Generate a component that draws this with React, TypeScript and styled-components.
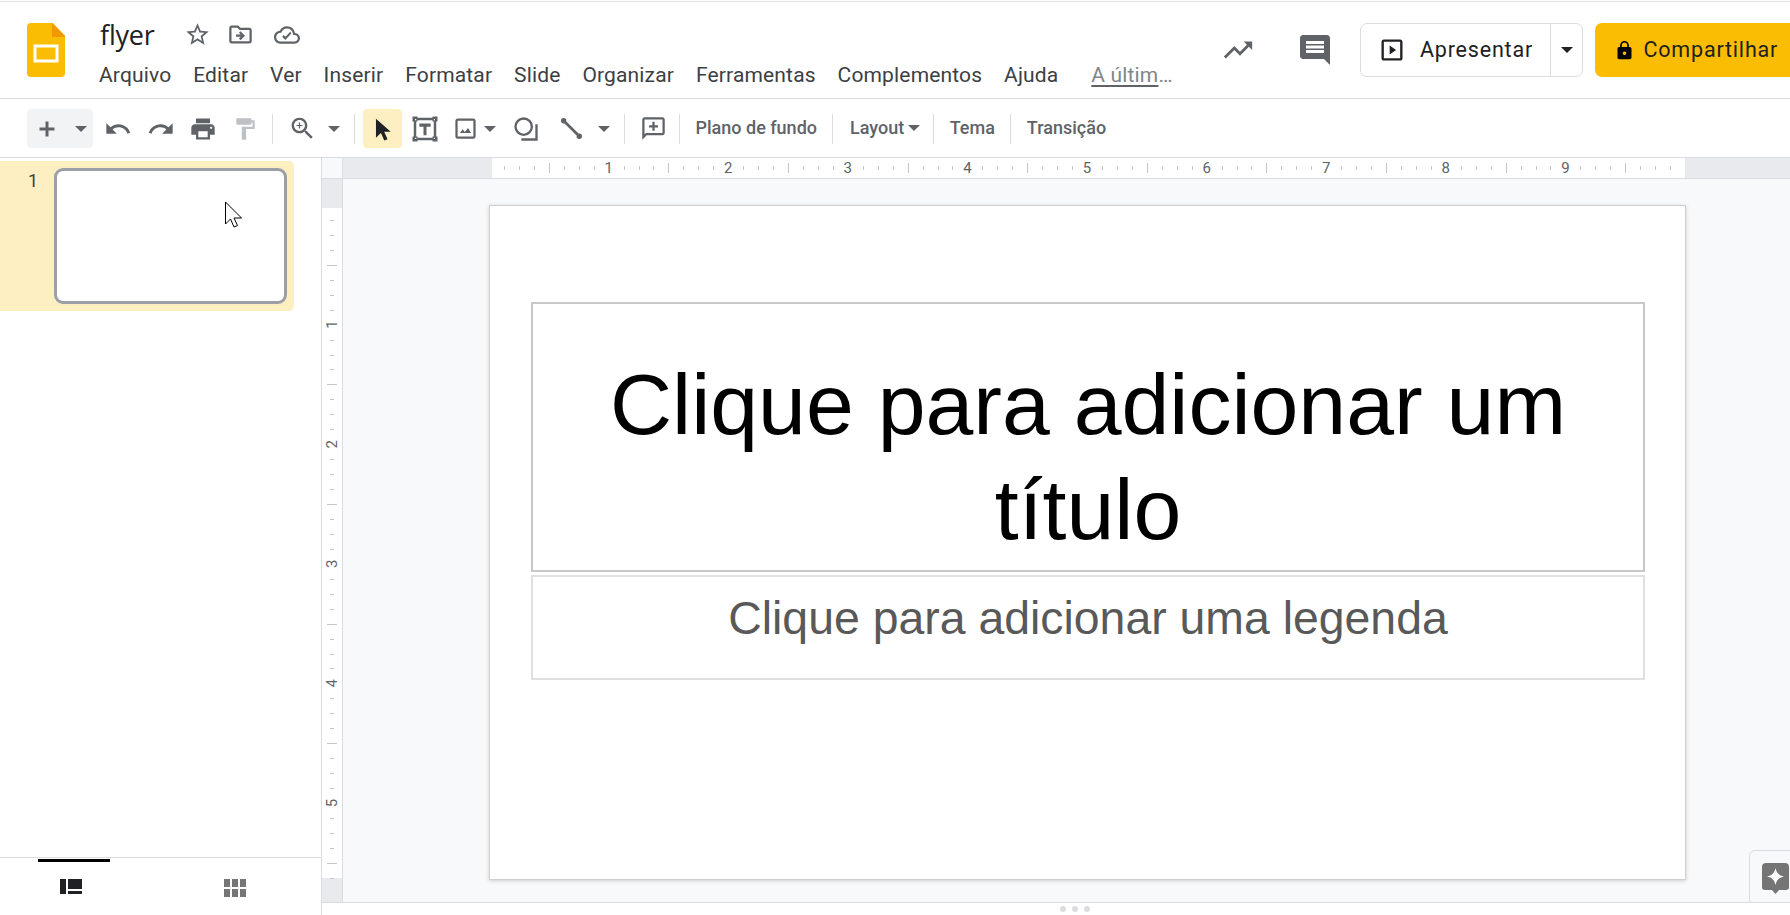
import React from 'react';
import styled, { createGlobalStyle } from 'styled-components';

const Global = createGlobalStyle`
  html, body { margin: 0; padding: 0; height: 100%; overflow: hidden; background: #fff; }
  body { font-family: Roboto, "Liberation Sans", sans-serif; color: #202124; }
  #root { height: 100%; }
`;

const Page = styled.div`
  width: 1790px; height: 915px; display: flex; flex-direction: column; overflow: hidden; background: #fff;
`;
const Header = styled.header`
  flex: none; height: 96px; margin-top: 1px; border-top: 1px solid #e0e0e0; border-bottom: 1px solid #dadce0;
  box-sizing: content-box; display: flex; align-items: flex-start; position: relative;
`;
const Logo = styled.svg`
  flex: none; width: 38px; height: 54px; margin: 21px 0 0 27px;
`;
const DocInfo = styled.div`
  margin-left: 34px; display: flex; flex-direction: column;
`;
const TitleRow = styled.div`
  height: 43px; margin-top: 11px; display: flex; align-items: center;
`;
const DocTitle = styled.span`
  font-family: "Open Sans", Roboto, sans-serif; font-size: 27px; color: #202124; width: 85px; letter-spacing: -0.2px; padding-left: 1px; box-sizing: border-box;
`;
const Glyph = styled.svg<{ $size: number; $color?: string; $ml?: number }>`
  flex: none; width: ${p => p.$size}px; height: ${p => p.$size}px; fill: ${p => p.$color || '#5f6368'};
  margin-left: ${p => p.$ml || 0}px; display: block;
`;
const Menu = styled.nav`
  display: flex; align-items: center; height: 38px;
`;
const MenuItem = styled.span`
  font-size: 21px; letter-spacing: 0.16px; color: #3c4043; margin-right: 21.850px; white-space: nowrap;
`;
const LastEdit = styled.span`
  font-size: 21px; letter-spacing: 0.16px; color: #80868b; white-space: nowrap; margin-left: 11px;
  span { text-decoration: underline; text-decoration-thickness: 2px; text-underline-offset: 3px; text-decoration-color: #5f6368; }
`;
const Right = styled.div`
  position: absolute; left: 1223px; top: 21px; display: flex; align-items: center; height: 54px; width: 600px;
`;
const PresentBtn = styled.div`
  margin-left: 27px; width: 223px; height: 54px; box-sizing: border-box; border: 1px solid #dadce0; border-radius: 7px;
  display: flex; align-items: center;
`;
const PresentMain = styled.div`
  width: 190px; height: 100%; box-sizing: border-box; border-right: 1px solid #dadce0; display: flex; align-items: center; padding-left: 17px;
`;
const BtnLabel = styled.span<{ $ml: number }>`
  font-family: Roboto, sans-serif; font-size: 21.500px; letter-spacing: 0.8px; color: #202124; margin: -2px 0 0 ${p => p.$ml}px; white-space: nowrap;
`;
const Caret = styled.span<{ $w?: number; $dark?: boolean }>`
  display: block; flex: none; width: 0; height: 0;
  border-left: ${p => (p.$w || 13) / 2}px solid transparent; border-right: ${p => (p.$w || 13) / 2}px solid transparent;
  border-top: ${p => (p.$w || 13) / 2}px solid ${p => (p.$dark ? '#202124' : '#5f6368')};
`;
const CaretCell = styled.div<{ $w: number; $ml?: number }>`
  flex: none; width: ${p => p.$w}px; margin-left: ${p => p.$ml || 0}px; display: flex; align-items: center; justify-content: center; height: 39px;
`;
const ShareBtn = styled.div`
  margin-left: 12px; flex: none; width: 230px; height: 54px; background: #fbbc04; border-radius: 7px; display: flex; align-items: center; padding-left: 18.500px; box-sizing: border-box;
`;
const Toolbar = styled.div`
  flex: none; height: 57px; border-bottom: 1px solid #dadce0; box-sizing: content-box; display: flex; align-items: center; padding-left: 27px; padding-top: 1px;
`;
const NewBtn = styled.div`
  flex: none; width: 66px; height: 39px; border-radius: 4px; background: #f1f3f4; display: flex; align-items: center; padding-left: 8px; box-sizing: border-box;
`;
const ToolBtn = styled.div<{ $w: number; $ml?: number; $active?: boolean }>`
  flex: none; width: ${p => p.$w}px; height: 39px; margin-left: ${p => p.$ml || 0}px; border-radius: 4px;
  background: ${p => (p.$active ? '#feefc3' : 'transparent')}; display: flex; align-items: center; justify-content: center;
`;
const Sep = styled.div<{ $ml: number }>`
  flex: none; width: 1px; height: 30px; margin-left: ${p => p.$ml}px; background: #dadce0;
`;
const TextBtn = styled.div<{ $pl?: number; $pr?: number }>`
  flex: none; height: 30px; padding: 0 ${p => p.$pr ?? 15.5}px 2px ${p => p.$pl ?? 15.5}px; box-sizing: border-box; font-size: 18px; font-weight: 500; color: #5f6368; display: flex; align-items: center; white-space: nowrap;
`;
const Work = styled.div`
  flex: 1; min-height: 0; display: flex;
`;
const Aside = styled.aside`
  flex: none; width: 321px; border-right: 1px solid #dadce0; display: flex; flex-direction: column;
`;
const Strip = styled.div`
  flex: 1; padding-top: 3px;
`;
const SlideRow = styled.div`
  width: 294px; height: 150px; background: #feefc3; border-radius: 0 5px 5px 0; display: flex; box-sizing: border-box; padding: 7px 7px 7px 0;
`;
const SlideNum = styled.span`
  width: 54px; padding: 2px 16px 0 0; box-sizing: border-box; text-align: right; font-size: 18px; color: #3c4043; font-family: Roboto, sans-serif;
`;
const Thumb = styled.div`
  flex: 1; background: #fff; border: 3px solid #9aa0a6; border-radius: 9px; position: relative;
`;
const Pointer = styled.svg`
  position: absolute; left: 167px; top: 30px; width: 20px; height: 28px;
`;
const AsideFoot = styled.div`
  flex: none; height: 57px; border-top: 1px solid #dadce0; display: flex; align-items: flex-start;
`;
const FootTab = styled.div<{ $ml: number; $on?: boolean }>`
  flex: none; width: 72px; height: 100%; box-sizing: border-box; margin-left: ${p => p.$ml}px; margin-top: 1px;
  border-top: 3px solid ${p => (p.$on ? '#000' : 'transparent')}; display: flex; justify-content: center; padding-top: 17px; padding-right: ${p => (p.$on ? 6 : 0)}px;
`;
const Main = styled.main`
  flex: 1; min-width: 0; display: flex; flex-direction: column; position: relative;
`;
const TopRulerRow = styled.div`
  flex: none; height: 20px; border-bottom: 1px solid #dadce0; display: flex; background: #f8f9fa;
`;
const Corner = styled.div`
  flex: none; width: 20px; border-right: 1px solid #dadce0;
`;
const RulerSvg = styled.svg`
  display: block; flex: none;
  text { font-family: Roboto, sans-serif; font-size: 15px; fill: #5f6368; text-anchor: middle; dominant-baseline: central; }
`;
const Body = styled.div`
  flex: 1; min-height: 0; display: flex;
`;
const LeftRuler = styled.div`
  flex: none; width: 20px; border-right: 1px solid #dadce0; background: #e8eaed;
`;
const Canvas = styled.div`
  flex: 1; background: #f8f9fa; position: relative; padding: 26px 0 0 146px; overflow: hidden;
`;
const SlideSheet = styled.div`
  width: 1197px; height: 675px; background: #fff; box-sizing: border-box; border: 1px solid #cfcfcf; box-shadow: 0 1px 4px rgba(60,64,67,.22);
  padding: 96px 40px 0 41px; display: flex; flex-direction: column; gap: 3px;
`;
const Placeholder = styled.div<{ $h: number; $big?: boolean }>`
  height: ${p => p.$h}px; box-sizing: border-box; border: 2px solid ${p => (p.$big ? '#c8c8c8' : '#e0e0e0')}; text-align: center;
  font-family: "Liberation Sans", Arial, sans-serif;
  font-size: ${p => (p.$big ? 86 : 46.4)}px; line-height: ${p => (p.$big ? 105 : 56)}px;
  color: ${p => (p.$big ? '#000' : '#595959')};
  padding-top: ${p => (p.$big ? 48 : 13)}px;
`;
const Floating = styled.div`
  position: absolute; left: 1406px; top: 671px; width: 60px; height: 55px; box-sizing: border-box;
  background: #f8f9fa; border: 1px solid #dadce0; border-radius: 6px 0 0 6px; padding: 12px 0 0 12px;
`;
const BottomStrip = styled.div`
  flex: none; height: 12px; border-top: 1px solid #dadce0; display: flex; gap: 6px; justify-content: center; align-items: center; padding-left: 38px;
`;
const Dot = styled.span`
  width: 6px; height: 6px; border-radius: 50%; background: #dadce0;
`;

const ICON = {
  star: 'M22 9.24l-7.19-.62L12 2 9.19 8.63 2 9.24l5.46 4.73L5.82 21 12 17.27 18.18 21l-1.63-7.03L22 9.24zM12 15.4l-3.76 2.27 1-4.28-3.32-2.88 4.38-.38L12 6.1l1.71 4.04 4.38.38-3.32 2.88 1 4.28L12 15.4z',
  folder: 'M20 6h-8l-2-2H4c-1.1 0-2 .9-2 2v12c0 1.1.9 2 2 2h16c1.1 0 2-.9 2-2V8c0-1.1-.9-2-2-2zm0 12H4V6h5.17l2 2H20v10zM12.16 12H8v2h4.16l-1.59 1.59L12 17l4-4-4-4-1.41 1.41z',
  cloud: 'M19.35 10.04C18.67 6.59 15.64 4 12 4 9.11 4 6.6 5.64 5.35 8.04 2.34 8.36 0 10.91 0 14c0 3.31 2.69 6 6 6h13c2.76 0 5-2.24 5-5 0-2.64-2.05-4.78-4.65-4.96zM19 18H6c-2.21 0-4-1.79-4-4 0-2.05 1.53-3.76 3.56-3.97l1.07-.11.5-.95C8.08 7.14 9.94 6 12 6c2.62 0 4.88 1.86 5.39 4.43l.3 1.5 1.53.11c1.56.1 2.78 1.41 2.78 2.96 0 1.65-1.35 3-3 3zM10.5 16.5l-3-3 1.41-1.41 1.59 1.58 4.59-4.58L16 10.5z',
  trend: 'M16 6l2.29 2.29-4.88 4.88-4-4L2 16.59 3.41 18l6-6 4 4 6.3-6.29L22 12V6z',
  comment: 'M21.99 4c0-1.1-.89-2-1.99-2H4c-1.1 0-2 .9-2 2v12c0 1.1.9 2 2 2h14l4 4-.01-18zM18 14H6v-2h12v2zm0-3H6V9h12v2zm0-3H6V6h12v2z',
  present: 'M19 3H5c-1.1 0-2 .9-2 2v14c0 1.1.9 2 2 2h14c1.1 0 2-.9 2-2V5c0-1.1-.9-2-2-2zm0 16H5V5h14v14zM10 8.2v7.6l5.5-3.8z',
  lock: 'M18 8h-1V6c0-2.76-2.24-5-5-5S7 3.24 7 6v2H6c-1.1 0-2 .9-2 2v10c0 1.1.9 2 2 2h12c1.1 0 2-.9 2-2V10c0-1.1-.9-2-2-2zm-6 9c-1.1 0-2-.9-2-2s.9-2 2-2 2 .9 2 2-.9 2-2 2zm3.1-9H8.9V6c0-1.71 1.39-3.1 3.1-3.1 1.71 0 3.1 1.39 3.1 3.1v2z',
  plus: 'M19.500 13.500h-6v6h-3v-6h-6v-3h6v-6h3v6h6v3z',
  undo: 'M12.5 8c-2.65 0-5.05.99-6.9 2.6L2 7v9h9l-3.62-3.62c1.39-1.16 3.16-1.88 5.12-1.88 3.54 0 6.55 2.31 7.6 5.5l2.37-.78C21.08 11.03 17.15 8 12.5 8z',
  redo: 'M18.4 10.6C16.55 8.99 14.15 8 11.5 8c-4.65 0-8.58 3.03-9.96 7.22L3.9 16c1.05-3.19 4.05-5.5 7.6-5.5 1.95 0 3.73.72 5.12 1.88L13 16h9V7l-3.6 3.6z',
  print: 'M19 8H5c-1.66 0-3 1.34-3 3v6h4v4h12v-4h4v-6c0-1.66-1.34-3-3-3zm-3 11H8v-5h8v5zm3-7c-.55 0-1-.45-1-1s.45-1 1-1 1 .45 1 1-.45 1-1 1zm-1-9H6v4h12V3z',
  paint: 'M18 4V3c0-.55-.45-1-1-1H5c-.55 0-1 .45-1 1v4c0 .55.45 1 1 1h12c.55 0 1-.45 1-1V6h1v4H9v11c0 .55.45 1 1 1h2c.55 0 1-.45 1-1v-9h8V4h-3z',
  zoom: 'M15.5 14h-.79l-.28-.27C15.41 12.59 16 11.11 16 9.5 16 5.91 13.09 3 9.5 3S3 5.91 3 9.5 5.91 16 9.5 16c1.61 0 3.09-.59 4.23-1.57l.27.28v.79l5 4.99L20.49 19l-4.99-5zm-6 0C7.01 14 5 11.99 5 9.5S7.01 5 9.5 5 14 7.01 14 9.5 11.99 14 9.5 14zM12 10h-2v2H9v-2H7V9h2V7h1v2h2v1z',
  cursor: 'M5.5 2.5V20l4.6-4.3 3.1 7 3-1.3-3.1-6.9h6z',
  textbox: 'M2 2h4v1h12V2h4v4h-1v12h1v4h-4v-1H6v1H2v-4h1V6H2V2zm2 2v1h1V4H4zm15 0v1h1V4h-1zM5 6v12h1v1h12v-1h1V6h-1V5H6v1H5zM4 19v1h1v-1H4zm15 0v1h1v-1h-1zM7.5 7.5h9v2.6h-3.3V17h-2.4v-6.9H7.5z',
  image: 'M19 3H5c-1.1 0-2 .9-2 2v14c0 1.1.9 2 2 2h14c1.1 0 2-.9 2-2V5c0-1.1-.9-2-2-2zm0 16H5V5h14v14zM14.2 11.5l-2.8 3.5-1.9-2.4L7 16h10z',
  shape: 'M10 2a8 8 0 0 1 8 8 8 8 0 0 1-8 8 8 8 0 0 1-8-8 8 8 0 0 1 8-8zm0 2a6 6 0 0 0-6 6 6 6 0 0 0 6 6 6 6 0 0 0 6-6 6 6 0 0 0-6-6zM20 8h2v14H8v-2h12z',
  line: 'M5.420 3.580L20.420 18.580L18.580 20.420L3.580 5.420zM4.500 1.900a2.600 2.600 0 1 1 0 5.200a2.600 2.600 0 1 1 0-5.200zM19.500 16.900a2.600 2.600 0 1 1 0 5.200a2.600 2.600 0 1 1 0-5.200z',
  addComment: 'M20 2H4c-1.1 0-2 .9-2 2v18l4-4h14c1.1 0 2-.9 2-2V4c0-1.1-.9-2-2-2zm0 14H5.2L4 17.2V4h16v12zM11 6h2v3h3v2h-3v3h-2v-3H8V9h3z',
  film: 'M0 0h6v15H0zM8 0h14v10H8zM8 12h14v3H8z',
  grid: 'M0 0h6v8H0zM8 0h6v8H8zM16 0h6v8h-6zM0 10h6v8H0zM8 10h6v8H8zM16 10h6v8h-6z',
};

const Icon = ({ d, size, color, ml, vb = 24 }: { d: string; size: number; color?: string; ml?: number; vb?: number }) => (
  <Glyph $size={size} $color={color} $ml={ml} viewBox={`0 0 ${vb} ${vb}`}><path d={d} /></Glyph>
);

const TopRuler = () => {
  const x0 = 489 - 343;
  const ticks: React.ReactNode[] = [];
  for (let i = 1; i < 80; i++) {
    const x = Math.round(x0 + i * 14.95) + 0.5;
    if (i % 8 === 0) continue;
    const big = i % 4 === 0;
    ticks.push(<line key={i} x1={x} x2={x} y1={big ? 5 : 8} y2={big ? 15 : 12} stroke="#c4c7c9" />);
  }
  return (
    <RulerSvg width={1447} height={20} viewBox="0 0 1447 20">
      <rect width="1447" height="20" fill="#e8eaed" />
      <rect x={149} width={1193} height={20} fill="#fff" />
      {ticks}
      {[1, 2, 3, 4, 5, 6, 7, 8, 9].map(n => (
        <text key={n} x={x0 + n * 119.6} y={10}>{n}</text>
      ))}
    </RulerSvg>
  );
};

const SideRuler = () => {
  const y0 = 205 - 179;
  const ticks: React.ReactNode[] = [];
  for (let i = 1; i <= 45; i++) {
    const y = Math.round(y0 + i * 14.95) + 0.5;
    if (i % 8 === 0) continue;
    const big = i % 4 === 0;
    ticks.push(<line key={i} y1={y} y2={y} x1={big ? 5 : 8} x2={big ? 15 : 12} stroke="#c4c7c9" />);
  }
  return (
    <RulerSvg width={20} height={723} viewBox="0 0 20 723">
      <rect x={0} y={29} width={20} height={670} fill="#fff" />
      {ticks}
      {[1, 2, 3, 4, 5].map(n => (
        <text key={n} x={10} y={y0 + n * 119.6} transform={`rotate(-90 10 ${y0 + n * 119.6})`}>{n}</text>
      ))}
    </RulerSvg>
  );
};

export default function App() {
  return (
    <Page>
      <Global />
      <Header>
        <Logo viewBox="0 0 38 54">
          <path d="M4 0h22l12 13v37a4 4 0 0 1-4 4H4a4 4 0 0 1-4-4V4a4 4 0 0 1 4-4z" fill="#fbbc04" />
          <path d="M25 0l13 13v1H25z" fill="#f29900" />
          <rect x="8" y="23" width="22" height="15" fill="none" stroke="#fff" strokeWidth="3" />
        </Logo>
        <DocInfo>
          <TitleRow>
            <DocTitle>flyer</DocTitle>
            <Icon d={ICON.star} size={27} ml={0} />
            <Icon d={ICON.folder} size={27} ml={16} />
            <Icon d={ICON.cloud} size={26} ml={20} />
          </TitleRow>
          <Menu>
            <MenuItem>Arquivo</MenuItem>
            <MenuItem>Editar</MenuItem>
            <MenuItem>Ver</MenuItem>
            <MenuItem>Inserir</MenuItem>
            <MenuItem>Formatar</MenuItem>
            <MenuItem>Slide</MenuItem>
            <MenuItem>Organizar</MenuItem>
            <MenuItem>Ferramentas</MenuItem>
            <MenuItem>Complementos</MenuItem>
            <MenuItem>Ajuda</MenuItem>
            <LastEdit><span>A últim</span>…</LastEdit>
          </Menu>
        </DocInfo>
        <Right>
          <Icon d={ICON.trend} size={34} ml={-2} />
          <Icon d={ICON.comment} size={36} ml={42} />
          <PresentBtn>
            <PresentMain>
              <Icon d={ICON.present} size={28} color="#202124" />
              <BtnLabel $ml={14}>Apresentar</BtnLabel>
            </PresentMain>
            <CaretCell $w={31}><Caret $w={12} $dark /></CaretCell>
          </PresentBtn>
          <ShareBtn>
            <Icon d={ICON.lock} size={21} color="#000" />
            <BtnLabel $ml={9}>Compartilhar</BtnLabel>
          </ShareBtn>
        </Right>
      </Header>
      <Toolbar>
        <NewBtn>
          <Icon d={ICON.plus} size={24} />
          <CaretCell $w={13} $ml={15}><Caret /></CaretCell>
        </NewBtn>
        <ToolBtn $w={42} $ml={4}><Icon d={ICON.undo} size={28} /></ToolBtn>
        <ToolBtn $w={43}><Icon d={ICON.redo} size={28} /></ToolBtn>
        <ToolBtn $w={42}><Icon d={ICON.print} size={28} /></ToolBtn>
        <ToolBtn $w={42}><Icon d={ICON.paint} size={26} color="#bdc1c6" /></ToolBtn>
        <Sep $ml={6} />
        <ToolBtn $w={38} $ml={10}><Icon d={ICON.zoom} size={29} /></ToolBtn>
        <CaretCell $w={26}><Caret /></CaretCell>
        <Sep $ml={7} />
        <ToolBtn $w={39} $ml={8} $active><Icon d={ICON.cursor} size={26} color="#202124" /></ToolBtn>
        <ToolBtn $w={42} $ml={2}><Icon d={ICON.textbox} size={30} /></ToolBtn>
        <ToolBtn $w={38}><Icon d={ICON.image} size={27} /></ToolBtn>
        <CaretCell $w={12}><Caret /></CaretCell>
        <ToolBtn $w={43} $ml={8}><Icon d={ICON.shape} size={28} /></ToolBtn>
        <ToolBtn $w={42} $ml={3}><Icon d={ICON.line} size={25} /></ToolBtn>
        <CaretCell $w={12} $ml={6}><Caret /></CaretCell>
        <Sep $ml={14} />
        <ToolBtn $w={38} $ml={9}><Icon d={ICON.addComment} size={27} /></ToolBtn>
        <Sep $ml={7} />
        <TextBtn>Plano de fundo</TextBtn>
        <Sep $ml={0} />
        <TextBtn $pl={16.5} $pr={13}>Layout<CaretCell $w={13} $ml={3}><Caret /></CaretCell></TextBtn>
        <Sep $ml={0} />
        <TextBtn>Tema</TextBtn>
        <Sep $ml={0} />
        <TextBtn>Transição</TextBtn>
      </Toolbar>
      <Work>
        <Aside>
          <Strip>
            <SlideRow>
              <SlideNum>1</SlideNum>
              <Thumb>
                <Pointer viewBox="0 0 20 28">
                  <path d="M1.5 1v22l5-5 3.5 8 3.5-1.5-3.5-7.5h7.5z" fill="#fff" stroke="#000" strokeWidth="1" />
                </Pointer>
              </Thumb>
            </SlideRow>
          </Strip>
          <AsideFoot>
            <FootTab $ml={38} $on><Icon d={ICON.film} size={22} vb={22} color="#202124" /></FootTab>
            <FootTab $ml={89}><Icon d={ICON.grid} size={22} vb={22} color="#757575" /></FootTab>
          </AsideFoot>
        </Aside>
        <Main>
          <TopRulerRow>
            <Corner />
            <TopRuler />
          </TopRulerRow>
          <Body>
            <LeftRuler><SideRuler /></LeftRuler>
            <Canvas>
              <SlideSheet>
                <Placeholder $h={270} $big>Clique para adicionar um título</Placeholder>
                <Placeholder $h={105}>Clique para adicionar uma legenda</Placeholder>
              </SlideSheet>
              <Floating>
                <svg width="27" height="31" viewBox="0 0 27 31" style={{ display: 'block' }}>
                  <path d="M4 0h19a4 4 0 0 1 4 4v20a3 3 0 0 1-3 3h-7l-3.500 4-3.500-4H3a3 3 0 0 1-3-3V4a4 4 0 0 1 4-4z" fill="#757575" />
                  <path d="M13.500 5c1 5 3.500 7.500 8.500 8.500-5 1-7.500 3.500-8.500 8.500-1-5-3.500-7.500-8.500-8.500 5-1 7.500-3.500 8.500-8.500z" fill="#fff" />
                </svg>
              </Floating>
            </Canvas>
          </Body>
          <BottomStrip><Dot /><Dot /><Dot /></BottomStrip>
        </Main>
      </Work>
    </Page>
  );
}
